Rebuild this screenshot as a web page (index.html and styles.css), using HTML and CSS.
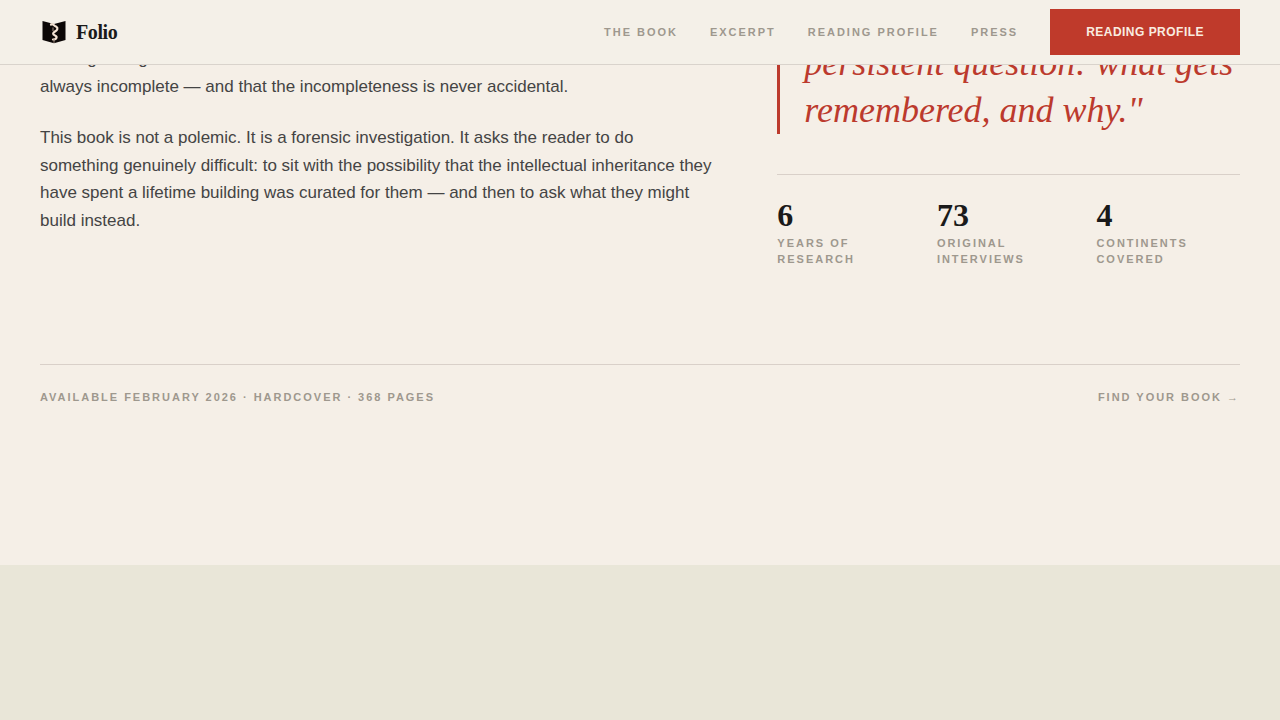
FILE: index.html
```
<!DOCTYPE html>
<html lang="en">
<head>
    <meta charset="UTF-8">
    <meta name="viewport" content="width=device-width, initial-scale=1.0">
    <title>Folio</title>
    <link rel="stylesheet" href="styles.css">
</head>
<body>
    <header class="site-header">
        <a class="brand" href="#">
            <svg class="brand-mark" viewBox="0 0 28 28" aria-hidden="true">
                <path d="M2.5 3 L14 6 L25.5 3 V22 L14 25.2 L2.5 22 Z" fill="#0b0706"/>
                <path d="M11 6.5 C13 5 14 8 16 8.5 C18.5 10 17.5 12 15 13.5 C12.5 15 12.5 16.5 15 17.5 C17.5 18.5 17 21.5 13 21.5" fill="none" stroke="#f3e3d3" stroke-width="2.2" stroke-linecap="round"/>
                <path d="M13 9.5 V13 M14 21 V25" stroke="#a08d80" stroke-width="1"/>
            </svg>
            <span>Folio</span>
        </a>
        <nav class="site-nav">
            <a href="#book">The Book</a>
            <a href="#excerpt">Excerpt</a>
            <a href="#profile">Reading Profile</a>
            <a href="#press">Press</a>
            <button type="button" class="nav-cta">Reading Profile</button>
        </nav>
    </header>

    <main>
        <section class="book" id="book">
            <div class="book-grid">
                <div class="book-copy">
                    <p>reading wrong is that the record we inherit is<br>
                    always incomplete — and that the incompleteness is never accidental.</p>
                    <p>This book is not a polemic. It is a forensic investigation. It asks the reader to do something genuinely difficult: to sit with the possibility that the intellectual inheritance they have spent a lifetime building was curated for them — and then to ask what they might build instead.</p>
                </div>
                <div class="book-aside">
                    <blockquote class="pull-quote">persistent question: what gets remembered, and why."</blockquote>
                    <dl class="stats">
                        <div class="stat">
                            <dd>6</dd>
                            <dt>Years of Research</dt>
                        </div>
                        <div class="stat">
                            <dd>73</dd>
                            <dt>Original Interviews</dt>
                        </div>
                        <div class="stat">
                            <dd>4</dd>
                            <dt>Continents Covered</dt>
                        </div>
                    </dl>
                </div>
            </div>
            <div class="book-meta">
                <span>Available February 2026 · Hardcover · 368 Pages</span>
                <a href="#profile">Find Your Book →</a>
            </div>
        </section>
        <section class="excerpt" id="excerpt"></section>
    </main>
</body>
</html>
```

FILE: styles.css
```
* { box-sizing: border-box; margin: 0; padding: 0; }

body {
    display: flex;
    flex-direction: column;
    min-height: 100vh;
    background: #f5efe7;
    color: #1a1a1a;
    font-family: "Liberation Sans", Arial, sans-serif;
}
a { color: inherit; text-decoration: none; }

/* Header */
.site-header {
    position: fixed;
    top: 0;
    left: 0;
    right: 0;
    z-index: 10;
    display: flex;
    align-items: center;
    justify-content: space-between;
    height: 65px;
    padding: 0 40px;
    background: #f4f0e8;
    border-bottom: 1px solid #d9d3cc;
}
.brand {
    display: flex;
    align-items: center;
    gap: 8px;
    font-family: "Liberation Serif", "Times New Roman", serif;
    font-size: 20px;
    font-weight: 700;
    letter-spacing: -0.02em;
}
.brand-mark { width: 28px; height: 28px; }
.site-nav { display: flex; align-items: center; gap: 32px; }
.site-nav a, .stat dt, .book-meta {
    color: #9e988e;
    font-size: 11px;
    font-weight: 700;
    letter-spacing: 0.18em;
    line-height: 16px;
    text-transform: uppercase;
}
.nav-cta {
    height: 46px;
    padding: 0 36px;
    border: 0;
    background: #bf3a2b;
    color: #f9ece0;
    font-family: inherit;
    font-size: 12px;
    font-weight: 700;
    letter-spacing: 0.04em;
    text-transform: uppercase;
    cursor: pointer;
}

/* The book */
main { display: flex; flex: 1; flex-direction: column; }
.book { padding: 40px 40px 160px; }
.book-grid {
    display: grid;
    grid-template-columns: repeat(12, 1fr);
    column-gap: 64px;
}
.book-copy {
    grid-column: span 7;
    padding-top: 5px;
    color: #444;
    font-size: 17px;
    line-height: 1.62;
}
.book-copy p + p { margin-top: 24px; }
.book-aside { grid-column: span 5; }
.pull-quote {
    padding-left: 24px;
    border-left: 3px solid #bc3a2d;
    color: #bc3a2d;
    font-family: "Liberation Serif", "Times New Roman", serif;
    font-size: 36px;
    font-style: italic;
    line-height: 47px;
}
.stats {
    display: grid;
    grid-template-columns: repeat(3, 1fr);
    gap: 16px;
    margin-top: 40px;
    padding-top: 24px;
    border-top: 1px solid #d9d0c9;
}
.stat { display: flex; flex-direction: column; gap: 4px; }
.stat dd {
    font-family: "Liberation Serif", "Times New Roman", serif;
    font-size: 32px;
    font-weight: 700;
    line-height: 32px;
}
.book-meta {
    display: flex;
    justify-content: space-between;
    margin-top: 97px;
    padding-top: 24px;
    border-top: 1px solid #d9d0c9;
}

/* Excerpt */
.excerpt { flex: 1; background: #e9e6d8; }
```
